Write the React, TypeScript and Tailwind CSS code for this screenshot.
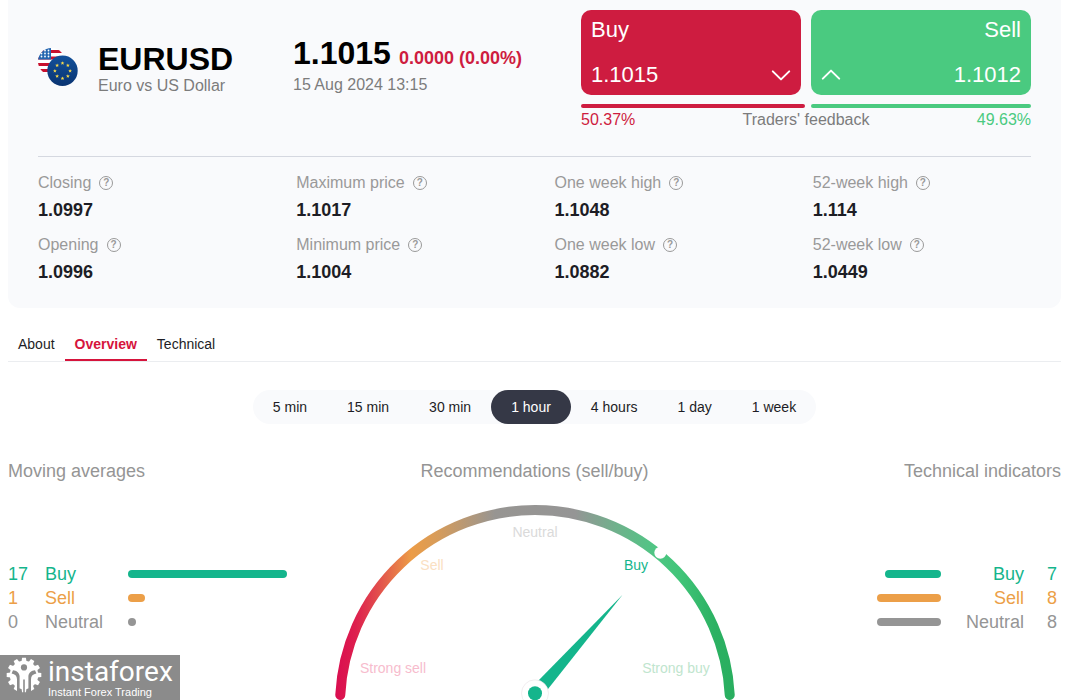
import { useState } from 'react';

interface Stat {
	label: string;
	value: string;
}

interface Signal {
	name: string;
	count: number;
	bar: number;
	text: string;
	fill: string;
}

const stats: Stat[] = [
	{ label: 'Closing', value: '1.0997' },
	{ label: 'Maximum price', value: '1.1017' },
	{ label: 'One week high', value: '1.1048' },
	{ label: '52-week high', value: '1.114' },
	{ label: 'Opening', value: '1.0996' },
	{ label: 'Minimum price', value: '1.1004' },
	{ label: 'One week low', value: '1.0882' },
	{ label: '52-week low', value: '1.0449' },
];

const movingAverages: Signal[] = [
	{ name: 'Buy', count: 17, bar: 159, text: 'text-[#14b58c]', fill: 'bg-[#14b58c]' },
	{ name: 'Sell', count: 1, bar: 17, text: 'text-[#ec9f48]', fill: 'bg-[#ec9f48]' },
	{ name: 'Neutral', count: 0, bar: 8, text: 'text-[#959595]', fill: 'bg-[#959595]' },
];

const indicators: Signal[] = [
	{ name: 'Buy', count: 7, bar: 56, text: 'text-[#14b58c]', fill: 'bg-[#14b58c]' },
	{ name: 'Sell', count: 8, bar: 64, text: 'text-[#ec9f48]', fill: 'bg-[#ec9f48]' },
	{ name: 'Neutral', count: 8, bar: 64, text: 'text-[#959595]', fill: 'bg-[#959595]' },
];

const tabs = ['About', 'Overview', 'Technical'];
const periods = ['5 min', '15 min', '30 min', '1 hour', '4 hours', '1 day', '1 week'];

function Flags() {
	const stars = Array.from({ length: 8 }, (_, i) => (i * Math.PI) / 4);
	return (
		<svg width="40" height="38" viewBox="0 0 40 38" aria-hidden="true">
			<defs>
				<clipPath id="usClip"><circle cx="13.5" cy="13.5" r="13.5" /></clipPath>
				<linearGradient id="euFill" x1="0" y1="0" x2="0" y2="1">
					<stop offset="0" stopColor="#12509a" />
					<stop offset="1" stopColor="#0a3472" />
				</linearGradient>
			</defs>
			<g clipPath="url(#usClip)">
				<rect width="27" height="27" fill="#fff" />
				{[2, 8.5, 15, 21].map(y => <rect key={y} y={y} width="27" height="3" fill="#c8102e" />)}
				<rect width="13" height="11.5" fill="#2465b0" />
				{[3.5, 7, 10.5].map(x => [2.5, 5.5, 8.5].map(y => (
					<circle key={`${x}-${y}`} cx={x} cy={y} r="0.9" fill="#fff" />
				)))}
			</g>
			<circle cx="24.5" cy="22.8" r="15.2" fill="url(#euFill)" />
			{stars.map(a => (
				<path
					key={a}
					d="M0-1.9 .55-.65 1.9-.6 .85.25 1.2 1.6 0 .85-1.2 1.6-.85.25-1.9-.6-.55-.65Z"
					transform={`translate(${24.5 + 7.6 * Math.cos(a)} ${22.8 + 7.6 * Math.sin(a)})`}
					fill="#f7d94a"
				/>
			))}
		</svg>
	);
}

function Gauge() {
	return (
		<svg width="400" height="195" viewBox="0 0 400 195" className="text-[14px]" role="img" aria-label="Buy">
			<defs>
				<linearGradient id="scale" gradientUnits="userSpaceOnUse" x1="0" y1="0" x2="400" y2="0">
					<stop offset="0" stopColor="#da0d50" />
					<stop offset="0.05" stopColor="#dd1e4e" />
					<stop offset="0.11" stopColor="#e2504c" />
					<stop offset="0.19" stopColor="#ec9c46" />
					<stop offset="0.25" stopColor="#d99c58" />
					<stop offset="0.4" stopColor="#979592" />
					<stop offset="0.6" stopColor="#959595" />
					<stop offset="0.7" stopColor="#70b08c" />
					<stop offset="0.8" stopColor="#4fc684" />
					<stop offset="0.86" stopColor="#41c579" />
					<stop offset="0.95" stopColor="#2bb162" />
					<stop offset="1" stopColor="#29ae5f" />
				</linearGradient>
			</defs>
			<path d="M5.26 190A195 195 0 0 1 394.74 190" fill="none" stroke="url(#scale)" strokeWidth="10" strokeLinecap="round" />
			<circle cx="325.3" cy="47.7" r="6" fill="#fff" />
			<path d="M287.6 89.7 203 176 212.6 184.5Z" fill="#14b58c" />
			<circle cx="200" cy="188.3" r="13.5" fill="#fff" stroke="#e8e0e4" strokeWidth="0.6" />
			<circle cx="200" cy="188.3" r="7" fill="#14b58c" />
			<g textAnchor="middle">
				<text x="200" y="32" fill="#dadada">Neutral</text>
				<text x="97" y="65" fill="#fae0c2">Sell</text>
				<text x="301" y="65" fill="#14b58c">Buy</text>
				<text x="58" y="168" fill="#f7bccd">Strong sell</text>
				<text x="341" y="168" fill="#bfe5ce">Strong buy</text>
			</g>
		</svg>
	);
}

function Watermark() {
	return (
		<div className="fixed bottom-0 left-0 flex h-[45px] w-[180px] items-start gap-1.5 bg-[#8b8b8b] pl-1.5 pt-0.5 text-white">
			<svg width="36" height="36" viewBox="-18 -18 36 36" className="shrink-0" aria-hidden="true">
				{Array.from({ length: 12 }, (_, i) => (
					<path key={i} d="M-2.6-13 -1.9-17.3H1.9L2.6-13Z" fill="#fff" transform={`rotate(${i * 30})`} />
				))}
				<circle r="14.2" fill="#fff" />
				<circle cy="-7.6" r="3.1" fill="#8b8b8b" />
				<path d="M-11-4.8C-7.5-4.5-4.8-2.5-4.4 1V18H-7V4.2C-7 .8-9-1-12.4-1.6Z" fill="#8b8b8b" />
				<path d="M11-4.8C7.5-4.5 4.8-2.5 4.4 1V18H7V4.2C7 .8 9-1 12.4-1.6Z" fill="#8b8b8b" />
				<path d="M-.8 4.5H.8V18H-.8Z" fill="#8b8b8b" />
			</svg>
			<div>
				<div className="font-[Roboto,sans-serif] text-[28px] leading-[29px]">instaforex</div>
				<div className="text-[11px] leading-3">Instant Forex Trading</div>
			</div>
		</div>
	);
}

export default function App() {
	const [tab, setTab] = useState('Overview');
	const [period, setPeriod] = useState('1 hour');

	return (
		<div className="overflow-hidden bg-white pl-2 pr-[25px] font-['Liberation_Sans',Arial,sans-serif] text-[#1d1d25]">
			<section className="rounded-b-xl bg-[#f9fafc] px-[30px] pb-[25px] pt-[10px]">
				<div className="flex items-start">
					<div className="flex w-[255px] gap-5 pt-[33px]">
						<div className="pt-[5px]"><Flags /></div>
						<div>
							<h1 className="text-[32px] font-bold leading-8 text-black">EURUSD</h1>
							<p className="text-base leading-[22px] text-[#7c7c7c]">Euro vs US Dollar</p>
						</div>
					</div>
					<div className="flex-1 pt-[27px]">
						<div className="flex items-baseline gap-2 font-bold">
							<span className="text-[32px] leading-8 text-black">1.1015</span>
							<span className="text-lg leading-6 text-[#ce1c40]">0.0000 (0.00%)</span>
						</div>
						<p className="mt-1 text-base leading-[22px] text-[#7c7c7c]">15 Aug 2024 13:15</p>
					</div>
					<div className="w-[450px]">
						<div className="grid grid-cols-2 gap-[10px] text-[22px] leading-[26px] text-white">
							<button type="button" className="flex h-[85px] flex-col items-start justify-between rounded-[10px] bg-[#ce1c40] px-[10px] py-[7px]">
								<span>Buy</span>
								<span className="flex w-full items-center justify-between">
									1.1015
									<svg width="20" height="12" viewBox="0 0 20 12" fill="none" stroke="currentColor" strokeWidth="2" strokeLinecap="round" strokeLinejoin="round"><path d="M1.8 2.4 10 10.4 18.2 2.4" /></svg>
								</span>
							</button>
							<button type="button" className="flex h-[85px] flex-col items-end justify-between rounded-[10px] bg-[#4aca80] px-[10px] py-[7px]">
								<span>Sell</span>
								<span className="flex w-full items-center justify-between">
									<svg width="20" height="12" viewBox="0 0 20 12" fill="none" stroke="currentColor" strokeWidth="2" strokeLinecap="round" strokeLinejoin="round"><path d="M1.8 9.6 10 1.6 18.2 9.6" /></svg>
									1.1012
								</span>
							</button>
						</div>
						<div className="mt-[9px] grid grid-cols-[5037fr_4963fr] gap-1.5">
							<div className="h-1 rounded-full bg-[#ce1c40]" />
							<div className="h-1 rounded-full bg-[#4aca80]" />
						</div>
						<div className="mt-0.5 flex justify-between text-base leading-5">
							<span className="text-[#ce1c40]">50.37%</span>
							<span className="text-[#7c7c7c]">Traders' feedback</span>
							<span className="text-[#4aca80]">49.63%</span>
						</div>
					</div>
				</div>

				<dl className="mt-[26px] grid grid-cols-4 gap-x-10 gap-y-[14px] border-t border-[#d5d8e0] pt-4">
					{stats.map(s => (
						<div key={s.label}>
							<dt className="flex items-center gap-2 text-base leading-5 text-[#999]">
								{s.label}
								<button type="button" className="flex size-[14px] items-center justify-center rounded-full border border-[#999] text-[10px] font-bold leading-3">?</button>
							</dt>
							<dd className="mt-1.5 text-lg font-bold leading-[22px]">{s.value}</dd>
						</div>
					))}
				</dl>
			</section>

			<nav className="mt-5 flex border-b border-[#ebedf0] text-sm">
				{tabs.map(t => (
					<button
						key={t}
						type="button"
						onClick={() => setTab(t)}
						className={`border-b-2 px-[10px] pt-0.5 leading-[29px] ${t === tab ? 'border-[#d6143c] font-bold text-[#d6143c]' : 'border-transparent'}`}
					>
						{t}
					</button>
				))}
			</nav>

			<div className="mt-7 flex justify-center">
				<div className="flex rounded-full bg-[#f9fafc] text-sm">
					{periods.map(p => (
						<button
							key={p}
							type="button"
							onClick={() => setPeriod(p)}
							className={`rounded-full px-5 leading-[34px] ${p === period ? 'bg-[#353846] text-white' : ''}`}
						>
							{p}
						</button>
					))}
				</div>
			</div>

			<div className="mt-[35px] grid grid-cols-[1fr_400px_1fr] text-lg leading-6">
				<section>
					<h2 className="text-[#959595]">Moving averages</h2>
					<ul className="mt-[79px]">
						{movingAverages.map(s => (
							<li key={s.name} className={`flex items-center ${s.text}`}>
								<span className="w-[37px]">{s.count}</span>
								<span className="w-[83px]">{s.name}</span>
								<span className={`h-2 rounded-full ${s.fill}`} style={{ width: s.bar }} />
							</li>
						))}
					</ul>
				</section>
				<section>
					<h2 className="text-center text-[#959595]">Recommendations (sell/buy)</h2>
					<div className="mt-[22px]"><Gauge /></div>
				</section>
				<section>
					<h2 className="text-right text-[#959595]">Technical indicators</h2>
					<ul className="mt-[79px]">
						{indicators.map(s => (
							<li key={s.name} className={`flex items-center justify-end pr-1 text-right ${s.text}`}>
								<span className={`h-2 rounded-full ${s.fill}`} style={{ width: s.bar }} />
								<span className="w-[83px]">{s.name}</span>
								<span className="w-[33px]">{s.count}</span>
							</li>
						))}
					</ul>
				</section>
			</div>

			<Watermark />
		</div>
	);
}
